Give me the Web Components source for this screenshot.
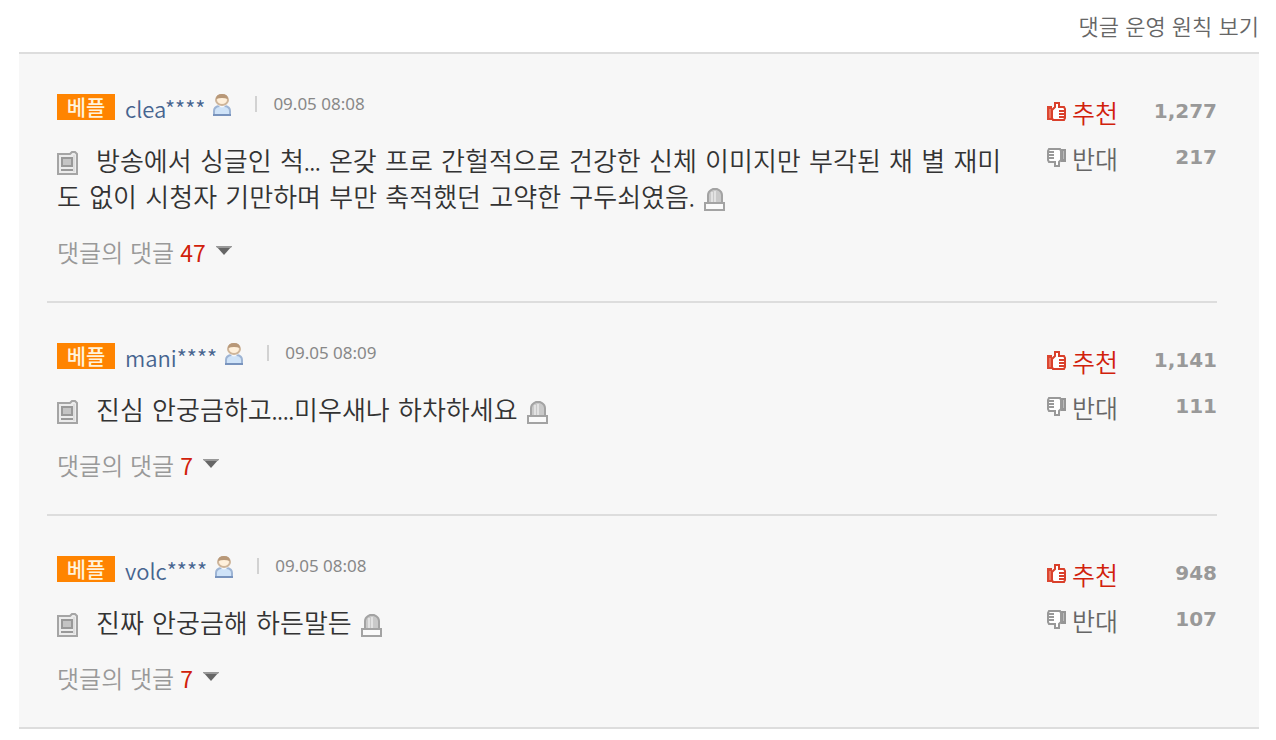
<!DOCTYPE html>
<html lang="ko">
<head>
<meta charset="utf-8">
<meta name="viewport" content="width=device-width, initial-scale=1">
<title>베플</title>
<style>
  body {
    margin: 0;
    background: #fff;
    color: #333;
    font-family: "Noto Sans CJK KR", sans-serif;
  }
  .dots {
    font: 400 20px "Noto Sans CJK KR", sans-serif;
    line-height: 1;
  }
</style>
</head>
<body>
<comment-board>
  <a slot="policy" href="#policy">댓글 운영 원칙 보기</a>
  <best-comment user="clea****" date="09.05 08:08" up="1,277" down="217" replies="47">방송에서 싱글인 척<span class="dots">...</span> 온갖 프로 간헐적으로 건강한 신체 이미지만 부각된 채 별 재미<wbr>도 없이 시청자 기만하며 부만 축적했던 고약한 구두쇠였음<span class="dots">.</span></best-comment>
  <best-comment user="mani****" date="09.05 08:09" up="1,141" down="111" replies="7">진심 안궁금하고<span class="dots">....</span>미우새나 하차하세요</best-comment>
  <best-comment user="volc****" date="09.05 08:08" up="948" down="107" replies="7">진짜 안궁금해 하든말든</best-comment>
</comment-board>

<script>
const ICONS = {
  user: `<svg width="20" height="24" viewBox="0 0 20 24">
    <path d="M2 21v-4q0-4 5-5h6q5 1 5 5v4z" fill="#cfe3f8" stroke="#9db4d4" stroke-width="2"/>
    <path d="M1 21h18" stroke="#7893bd" stroke-width="2"/>
    <path d="M6 11q4 5 8 0" fill="#f3f7fb"/>
    <ellipse cx="10" cy="6" rx="6" ry="5" fill="#fff0db" stroke="#ceb59a" stroke-width="2"/>
    <path d="M4 5q0-5 6-5t6 5q-3-1-6-1T4 5z" fill="#b89878"/>
  </svg>`,
  paper: `<svg width="21" height="24" viewBox="0 0 21 24">
    <path d="M1 3h12l2-2h3l2 2v20H1z" fill="#ececec" stroke="#a5a5a5" stroke-width="2"/>
    <path d="M17 4v17" stroke="#d0d0d0"/>
    <rect x="5" y="7" width="10" height="8" fill="#c4c4c4" stroke="#999" stroke-width="2"/>
    <path d="M4 19h12" stroke="#999" stroke-width="2"/>
  </svg>`,
  siren: `<svg width="21" height="24" viewBox="0 0 21 24">
    <path d="M4 16V8q0-3 3-5l2-1h4l2 1q3 2 3 5v8z" fill="#c9c9c9" stroke="#a3a3a3" stroke-width="2"/>
    <path d="M8 5v10M11 4v11" stroke="#e2e2e2" stroke-width="2"/>
    <rect x="1" y="16" width="19" height="7" fill="#fafafa" stroke="#a3a3a3" stroke-width="2"/>
  </svg>`,
  up: `<svg width="19" height="19" viewBox="0 0 19 19">
    <path d="M0 4h5v14H0z" fill="#dc4630"/>
    <path d="M2 7h2v9H2z" fill="#ea7561"/>
    <path d="M5 8l3-3V1h4v4h5l1 2v9l-1 2H6l-1-2z" fill="#fff" stroke="#d9402b" stroke-width="2"/>
    <path d="M12 9h5M12 12h5M12 15h5" stroke="#d9402b" stroke-width="2"/>
  </svg>`,
  down: `<svg width="19" height="19" viewBox="0 0 19 19">
    <path d="M14 1h5v13h-5z" fill="#959595"/>
    <path d="M16 3h1v8h-1z" fill="#bbb"/>
    <path d="M14 12l-2 2v4H8v-4H2l-1-2V3l1-2h11l1 2z" fill="#fff" stroke="#999" stroke-width="2"/>
    <path d="M2 4h5M2 7h5M2 10h5" stroke="#999" stroke-width="2"/>
  </svg>`,
  arrow: `<svg width="16" height="10" viewBox="0 0 16 10">
    <path d="M0 0h16L8 9z" fill="#666"/>
    <path d="M0 0h16l-1 2H1z" fill="#999"/>
  </svg>`
};

class CommentBoard extends HTMLElement {
  connectedCallback() {
    this.attachShadow({ mode: 'open' });
    this.shadowRoot.innerHTML = `
      <style>
        :host {
          display: block;
          padding: 8px 17px 12px 19px;
        }
        header {
          display: flex;
          justify-content: flex-end;
          height: 44px;
        }
        ::slotted(a) {
          color: #666;
          font-size: 22px;
          font-weight: 350;
          line-height: 34px;
          text-decoration: none;
        }
        section {
          padding: 0 42px 0 28px;
          background: #f7f7f7;
          border: solid #ddd;
          border-width: 2px 0;
        }
      </style>
      <header><slot name="policy"></slot></header>
      <section><slot></slot></section>
    `;
  }
}

class VoteButton extends HTMLElement {
  connectedCallback() {
    const type = this.getAttribute('type');
    this.attachShadow({ mode: 'open' });
    this.shadowRoot.innerHTML = `
      <style>
        :host {
          display: flex;
          justify-content: space-between;
          height: 38px;
        }
        button {
          display: flex;
          gap: 6px;
          padding: 0;
          border: 0;
          background: none;
          color: ${type === 'up' ? '#d1210b' : '#666'};
          font: 350 25px/36px "Noto Sans CJK KR", sans-serif;
          cursor: pointer;
        }
        svg {
          margin-top: 8px;
        }
        output {
          color: #999;
          font: bold 20px/34px "DejaVu Sans", sans-serif;
        }
      </style>
      <button type="button" id="vote">${ICONS[type]}<span><slot></slot></span></button>
      <output for="vote">${this.getAttribute('count')}</output>
    `;
  }
}

class BestComment extends HTMLElement {
  connectedCallback() {
    const get = name => this.getAttribute(name);
    this.attachShadow({ mode: 'open' });
    this.shadowRoot.innerHTML = `
      <style>
        :host {
          display: block;
          border-top: 2px solid #ddd;
        }
        :host(:first-of-type) {
          border-top: 0;
        }
        article {
          display: grid;
          grid-template-columns: 1fr 170px;
          gap: 30px;
          padding: 40px 0 31px 10px;
        }
        .head {
          display: flex;
          align-items: flex-start;
          height: 26px;
        }
        .badge {
          width: 58px;
          height: 26px;
          margin-right: 10px;
          background: #ff8400;
          color: #fff3dc;
          font-size: 21px;
          font-weight: 500;
          line-height: 24px;
          text-align: center;
        }
        .name {
          margin-right: 7px;
          color: #46648f;
          font-size: 22px;
          font-weight: 350;
          line-height: 28px;
          text-decoration: none;
        }
        time {
          margin-left: 23px;
          color: #888;
          font: 17px/20px "Noto Sans", sans-serif;
        }
        time::before {
          content: "";
          display: inline-block;
          height: 16px;
          margin-right: 16px;
          border-left: 2px solid #d2d2d2;
          vertical-align: -2px;
        }
        p {
          margin: 24px 0 18px;
          color: #333;
          font: 350 26px/36px "DejaVu Sans", "Noto Sans CJK KR", sans-serif;
        }
        p svg {
          vertical-align: -4px;
        }
        p > svg {
          margin-right: 18px;
        }
        button {
          padding: 0;
          border: 0;
          background: none;
          cursor: pointer;
        }
        .report {
          margin-left: 9px;
          font: inherit;
        }
        .replies {
          display: flex;
          color: #999;
          font: 350 24px/36px "Noto Sans CJK KR", sans-serif;
        }
        .replies b {
          margin: 0 10px 0 6px;
          color: #d1210b;
          font-size: 23px;
          font-weight: 400;
        }
        .replies svg {
          margin-top: 12px;
        }
        .votes {
          display: flex;
          flex-direction: column;
          gap: 8px;
        }
      </style>
      <article>
        <div>
          <div class="head">
            <span class="badge">베플</span>
            <a class="name" href="#user">${get('user')}</a>
            ${ICONS.user}
            <time>${get('date')}</time>
          </div>
          <p>${ICONS.paper}<slot></slot><button class="report" type="button" aria-label="신고">${ICONS.siren}</button></p>
          <button class="replies" type="button"><span>댓글의 댓글</span><b>${get('replies')}</b>${ICONS.arrow}</button>
        </div>
        <div class="votes">
          <vote-button type="up" count="${get('up')}">추천</vote-button>
          <vote-button type="down" count="${get('down')}">반대</vote-button>
        </div>
      </article>
    `;
  }
}

customElements.define('vote-button', VoteButton);
customElements.define('best-comment', BestComment);
customElements.define('comment-board', CommentBoard);
</script>
</body>
</html>
